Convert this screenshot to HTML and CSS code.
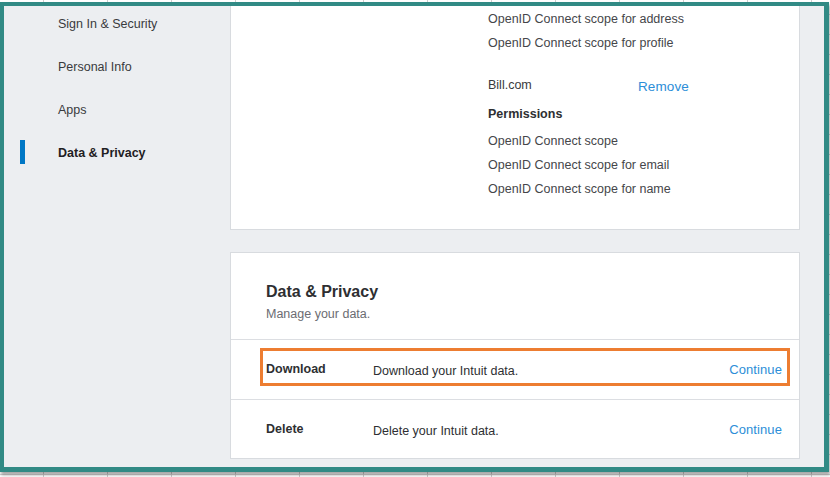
FILE: index.html
```html
<!DOCTYPE html>
<html lang="en">
<head>
<meta charset="utf-8">
<title>Data &amp; Privacy</title>
<link rel="stylesheet" href="styles.css">
</head>
<body>
<div class="frame">
  <nav class="sidebar">
    <div class="nav-item"><span class="marker"></span><span>Sign In &amp; Security</span></div>
    <div class="nav-item"><span class="marker"></span><span>Personal Info</span></div>
    <div class="nav-item"><span class="marker"></span><span>Apps</span></div>
    <div class="nav-item active"><span class="marker"></span><span>Data &amp; Privacy</span></div>
  </nav>
  <main class="main">
    <section class="card apps-card">
      <div class="perm-col">
        <div class="line">OpenID Connect scope for address</div>
        <div class="line">OpenID Connect scope for profile</div>
        <div class="app-row">
          <span class="app-name">Bill.com</span>
          <span class="link remove">Remove</span>
        </div>
        <div class="perm-title">Permissions</div>
        <div class="perm-list">
          <div class="line">OpenID Connect scope</div>
          <div class="line">OpenID Connect scope for email</div>
          <div class="line">OpenID Connect scope for name</div>
        </div>
      </div>
    </section>
    <section class="card privacy-card">
      <header class="privacy-head">
        <h2 class="title">Data &amp; Privacy</h2>
        <p class="sub">Manage your data.</p>
      </header>
      <div class="row">
        <div class="box hl">
          <span class="label">Download</span>
          <span class="desc">Download your Intuit data.</span>
          <span class="link">Continue</span>
        </div>
      </div>
      <div class="row last">
        <div class="box">
          <span class="label">Delete</span>
          <span class="desc">Delete your Intuit data.</span>
          <span class="link">Continue</span>
        </div>
      </div>
    </section>
  </main>
</div>
</body>
</html>
```

FILE: styles.css
```css
* { box-sizing: border-box; }

html, body {
  margin: 0;
  padding: 0;
}

body {
  width: 830px;
  height: 477px;
  overflow: hidden;
  font-family: "Liberation Sans", Arial, sans-serif;
  color: #393a3d;
  background-color: #ffffff;
  background-image:
    repeating-linear-gradient(90deg, transparent 0, transparent 43px, #cdcdcd 43px, #cdcdcd 44px, transparent 44px, transparent 64px),
    repeating-linear-gradient(180deg, transparent 0, transparent 14px, #d6d6d6 14px, #d6d6d6 15px, transparent 15px, transparent 20px);
  padding-top: 2px;
}

.frame {
  width: 829px;
  height: 470px;
  border-style: solid;
  border-color: #318a85;
  border-width: 4px 5px 5px 4px;
  background: #eceef1;
  display: flex;
  overflow: hidden;
  box-shadow: 1px 3px 3px rgba(0, 0, 0, 0.35);
}

/* Sidebar */
.sidebar {
  width: 226px;
  flex: none;
  padding-top: 6px;
}

.nav-item {
  display: flex;
  align-items: center;
  height: 24px;
  margin-bottom: 19px;
  font-size: 12.5px;
  color: #393a3d;
}

.marker {
  width: 5px;
  height: 24px;
  margin-left: 16px;
  margin-right: 33px;
  flex: none;
  position: relative;
  top: -1px;
}

.nav-item.active {
  font-weight: bold;
  color: #1f2023;
}

.nav-item.active .marker {
  background: #0077c5;
}

/* Main column */
.main {
  width: 594px;
  padding-right: 24px;
  display: flex;
  flex-direction: column;
}

.card {
  background: #ffffff;
  border: 1px solid #d8dbdf;
}

.apps-card {
  border-top: none;
  padding: 1px 0 28px 257px;
}

.perm-col {
  font-size: 12.5px;
  color: #45464a;
}

.line {
  line-height: 24px;
  height: 24px;
}

.app-row {
  display: flex;
  align-items: center;
  height: 24px;
  margin-top: 19px;
}

.app-name {
  width: 150px;
  color: #393a3d;
  position: relative;
  top: -1px;
}

.link {
  color: #2c8ed8;
  font-size: 13px;
  letter-spacing: 0.1px;
}

.remove {
  font-size: 13.5px;
}

.perm-title {
  margin-top: 4px;
  line-height: 24px;
  font-weight: bold;
  color: #2e2f32;
}

.perm-list {
  margin-top: 3px;
}

/* Privacy card */
.privacy-card {
  margin-top: 22px;
}

.privacy-head {
  padding: 29px 0 16px 35px;
  border-bottom: 1px solid #dcdee2;
}

.title {
  margin: 0;
  font-size: 16px;
  line-height: 20px;
  font-weight: bold;
  color: #2e2f32;
}

.sub {
  margin: 3px 0 0;
  font-size: 12.5px;
  line-height: 18px;
  color: #6b6c72;
}

.row {
  padding: 8px 9px 13px 29px;
  border-bottom: 1px solid #dcdee2;
}

.row.last {
  border-bottom: none;
  padding-bottom: 12px;
}

.box {
  display: flex;
  align-items: center;
  height: 38px;
  border: 3px solid transparent;
  padding: 5px 5px 0 3px;
}

.box.hl {
  border-color: #ed7d31;
}

.label {
  width: 107px;
  font-size: 12.5px;
  font-weight: bold;
  color: #2e2f32;
  position: relative;
  top: -1px;
}

.desc {
  flex: 1;
  font-size: 12.5px;
  color: #2e2f32;
  position: relative;
  top: 1px;
}
```
